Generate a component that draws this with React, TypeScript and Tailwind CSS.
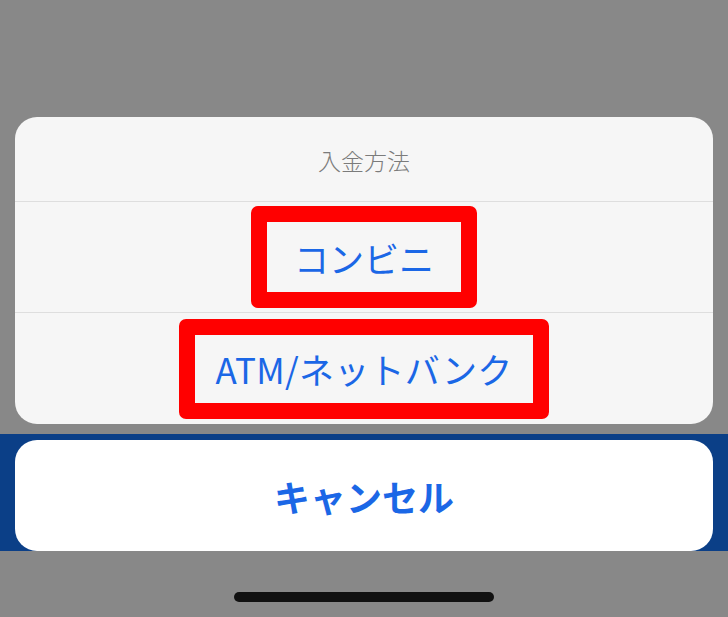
export default function App() {
  return (
    <main
      className="flex h-[617px] w-full flex-col overflow-hidden bg-[#888888]"
      style={{ fontFamily: '"Noto Sans CJK JP", "Noto Sans", sans-serif' }}
    >
      <div className="h-[117px] shrink-0" />

      <section className="mx-[15px] flex flex-col rounded-[22px] bg-[#f6f6f6]">
        <div className="flex h-[85px] items-center justify-center border-b border-[#dedede]">
          <p className="pt-[3px] text-[23px] font-light text-[#7b7b7b]">入金方法</p>
        </div>
        <div className="flex h-[111px] items-center justify-center border-b border-[#dedede]">
          <div className="flex h-[102px] w-[226px] items-center justify-center rounded-[7px] border-[16px] border-[#ff0000]">
            <span className="text-[35px] leading-none text-[#1b67e6]">コンビニ</span>
          </div>
        </div>
        <div className="flex h-[111px] items-center justify-center">
          <div className="flex h-[100px] w-[370px] items-center justify-center rounded-[7px] border-[16px] border-[#ff0000]">
            <span className="text-[35px] leading-none tracking-[0.3px] text-[#1b67e6]">ATM/ネットバンク</span>
          </div>
        </div>
      </section>

      <div className="h-[10px] shrink-0" />

      <div className="bg-[#0b3f87] pt-[6px]">
        <button
          type="button"
          className="mx-[15px] flex h-[111px] w-[698px] items-center justify-center rounded-[22px] bg-white"
        >
          <span className="text-[36px] font-bold leading-none text-[#1b67e6]">キャンセル</span>
        </button>
      </div>

      <div className="flex flex-1 justify-center pt-[41px]">
        <div className="h-[10px] w-[260px] rounded-full bg-[#111111]" />
      </div>
    </main>
  );
}
